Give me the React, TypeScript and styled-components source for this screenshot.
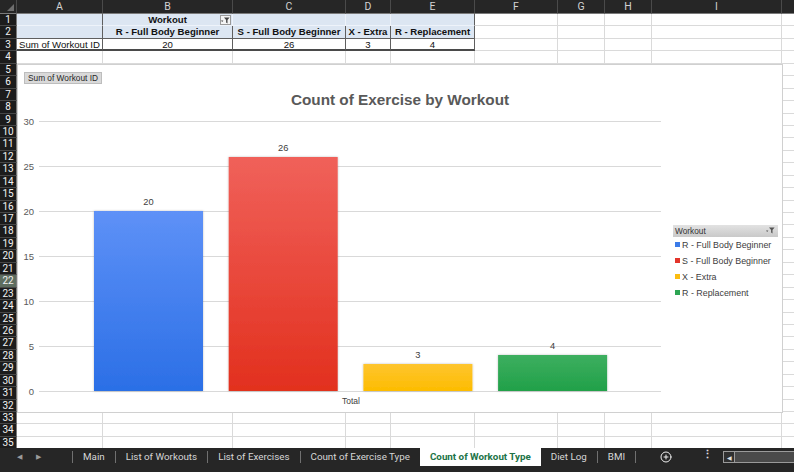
import React from 'react';
import styled, { createGlobalStyle } from 'styled-components';
import { CirclePlus } from 'lucide-react';

const GlobalStyle = createGlobalStyle`
  html, body {
    margin: 0;
    padding: 0;
    background: #262626;
    overflow: hidden;
  }
  * {
    box-sizing: border-box;
  }
`;

const COLUMNS = [
  { name: 'A', width: 86 },
  { name: 'B', width: 130 },
  { name: 'C', width: 113 },
  { name: 'D', width: 45 },
  { name: 'E', width: 84 },
  { name: 'F', width: 83 },
  { name: 'G', width: 47 },
  { name: 'H', width: 47 },
  { name: 'I', width: 130 },
  { name: 'J', width: 60 },
];

const TEMPLATE = `17px ${COLUMNS.map(c => `${c.width}px`).join(' ')}`;
const ROW_COUNT = 35;
const SELECTED_ROW = 22;

type Edge = 'grid' | 'light' | 'dark' | 'thick';

type CellSpec = {
  text?: string;
  band?: boolean;
  strong?: boolean;
  align?: 'left' | 'center';
  right?: Edge;
  bottom?: Edge;
  filter?: boolean;
};

const WORKOUTS = [
  { label: 'R - Full Body Beginner', value: 20, top: '#5e91f7', bottom: '#2b6fe6', swatch: '#3b7be8' },
  { label: 'S - Full Body Beginner', value: 26, top: '#f0615a', bottom: '#e2301e', swatch: '#e3352b' },
  { label: 'X - Extra', value: 3, top: '#fec52f', bottom: '#fdbc00', swatch: '#fbbd11' },
  { label: 'R - Replacement', value: 4, top: '#3daf5f', bottom: '#21a049', swatch: '#2da553' },
];

// Pivot table in A1:E3, everything else is an empty cell.
function cellSpec(row: number, col: number): CellSpec {
  if (row > 3 || col > 4) return {};
  const right: Edge = col === 0 || col === 4 || row > 1 ? 'dark' : 'light';
  if (row === 1) {
    return col === 1
      ? { text: 'Workout', band: true, strong: true, align: 'center', right, bottom: 'light', filter: true }
      : { band: true, right, bottom: 'light' };
  }
  if (row === 2) {
    return col === 0
      ? { band: true, right, bottom: 'dark' }
      : { text: WORKOUTS[col - 1].label, band: true, strong: true, align: 'center', right, bottom: 'dark' };
  }
  return col === 0
    ? { text: 'Sum of Workout ID', right, bottom: 'thick' }
    : { text: String(WORKOUTS[col - 1].value), align: 'center', right, bottom: 'thick' };
}

const edgeCss = (edge: Edge = 'grid') => {
  switch (edge) {
    case 'light':
      return '1px solid #eef3fa';
    case 'dark':
      return '1px solid #5f5f5f';
    case 'thick':
      return '2px solid #4a4a4a';
    default:
      return '1px solid #dadada';
  }
};

const Window = styled.div`
  width: 794px;
  height: 472px;
  display: flex;
  flex-direction: column;
  background: #262626;
  overflow: hidden;
`;

const Sheet = styled.div`
  position: relative;
  height: 448px;
  flex: none;
  overflow: hidden;
  background: #fff;
`;

const Grid = styled.div`
  display: grid;
  grid-template-columns: ${TEMPLATE};
  grid-template-rows: 14px;
  grid-auto-rows: 12.45px;
`;

const Corner = styled.div`
  position: relative;
  background: #262626;
  border-right: 1px solid #4a4a4a;
  border-bottom: 1px solid #7a7a7a;

  &::after {
    content: '';
    position: absolute;
    right: 2px;
    bottom: 2px;
    border-left: 7px solid transparent;
    border-bottom: 7px solid #6e6e6e;
  }
`;

const ColHead = styled.div`
  background: #262626;
  color: #d2d2d2;
  font: 10.5px Roboto, 'Liberation Sans', sans-serif;
  line-height: 13px;
  text-align: center;
  border-right: 1px solid #4a4a4a;
  border-bottom: 1px solid #7a7a7a;
`;

const RowHead = styled.div<{ $selected?: boolean }>`
  background: ${p => (p.$selected ? '#5e6d5f' : '#1c1c1c')};
  color: #f2f2f2;
  font: 10px Roboto, 'Liberation Sans', sans-serif;
  line-height: 12px;
  text-align: center;
  border-bottom: 1px solid #474747;
  border-right: 1px solid #7a7a7a;
`;

const Cell = styled.div<{ $band?: boolean; $strong?: boolean; $align?: string; $right?: Edge; $bottom?: Edge }>`
  position: relative;
  background: ${p => (p.$band ? '#dce6f2' : '#fff')};
  color: #111;
  font-family: 'Liberation Sans', Arial, sans-serif;
  font-size: 9.6px;
  font-weight: ${p => (p.$strong ? 700 : 400)};
  line-height: 12px;
  text-align: ${p => p.$align || 'left'};
  padding: 0 2px;
  white-space: nowrap;
  overflow: hidden;
  border-right: ${p => edgeCss(p.$right)};
  border-bottom: ${p => edgeCss(p.$bottom)};
`;

const FilterButton = styled.span`
  position: absolute;
  right: 1px;
  top: 1px;
  width: 11px;
  height: 10px;
  display: flex;
  align-items: center;
  justify-content: center;
  background: #f4f4f4;
  border: 1px solid #9a9a9a;
`;

const Chart = styled.div`
  position: absolute;
  left: 17px;
  top: 64px;
  width: 766px;
  height: 349px;
  background: #fff;
  border: 1px solid #d0d0d0;
  display: grid;
  grid-template-rows: 48px 1fr;
`;

const ChartHeader = styled.div`
  display: grid;
  grid-template-columns: 1fr auto 1fr;
  align-items: start;
`;

const FieldButton = styled.div`
  justify-self: start;
  margin: 7px 0 0 6px;
  height: 12px;
  padding: 0 3px;
  background: #d9d9d9;
  border: 1px solid #bdbdbd;
  color: #262626;
  font: 8.3px 'Liberation Sans', Arial, sans-serif;
  line-height: 10px;
  white-space: nowrap;
`;

const Title = styled.div`
  padding-top: 26px;
  color: #595959;
  font: 700 15.3px 'Liberation Sans', Arial, sans-serif;
  line-height: 18px;
  white-space: nowrap;
`;

const ChartBody = styled.div`
  display: grid;
  grid-template-columns: 650px 1fr;
`;

const Legend = styled.div`
  align-self: center;
  margin-left: 5px;
  width: 105px;
  display: flex;
  flex-direction: column;
`;

const LegendHeader = styled.div`
  height: 12px;
  display: flex;
  align-items: center;
  justify-content: space-between;
  padding: 0 3px 0 2px;
  background: linear-gradient(#e2e2e2, #c9c9c9);
  color: #333;
  font: 8.3px 'Liberation Sans', Arial, sans-serif;
`;

const LegendItem = styled.div`
  height: 16px;
  display: flex;
  align-items: center;
  gap: 2px;
  padding-left: 2px;
  color: #404040;
  font: 8.9px 'Liberation Sans', Arial, sans-serif;
  white-space: nowrap;
`;

const Swatch = styled.span<{ $color: string }>`
  width: 5px;
  height: 5px;
  background: ${p => p.$color};
`;

const TabBar = styled.div`
  height: 24px;
  flex: none;
  display: flex;
  align-items: flex-start;
  background: #262626;
  font-family: Roboto, 'Liberation Sans', sans-serif;
`;

const Nav = styled.div`
  width: 72px;
  height: 18px;
  display: flex;
  align-items: center;
  gap: 14px;
  padding-left: 17px;
  color: #9a9a9a;
  font-size: 7px;
`;

const Divider = styled.span`
  width: 1px;
  height: 12px;
  margin-top: 3px;
  background: #707070;
`;

const Tab = styled.div<{ $active?: boolean }>`
  height: 18px;
  padding: 0 10px;
  line-height: 18px;
  font-size: 9.8px;
  font-weight: ${p => (p.$active ? 700 : 400)};
  color: ${p => (p.$active ? '#217346' : '#d6d6d6')};
  background: ${p => (p.$active ? '#ffffff' : 'transparent')};
  white-space: nowrap;
`;

const AddSheet = styled.div`
  height: 18px;
  display: flex;
  align-items: center;
  margin-left: 24px;
  color: #f0f0f0;
`;

const More = styled.div`
  height: 18px;
  line-height: 17px;
  margin-left: 30px;
  color: #e0e0e0;
  font: 700 11px 'Liberation Sans', Arial, sans-serif;
`;

const ScrollTrack = styled.div`
  flex: 1;
  height: 12px;
  margin: 3px 0 0 10px;
  display: flex;
  background: #4a4a4a;
  border: 1px solid #9a9a9a;
  border-right: none;
`;

const ScrollArrow = styled.div`
  width: 11px;
  display: flex;
  align-items: center;
  justify-content: center;
  border-right: 1px solid #9a9a9a;
  background: #303030;
  color: #e0e0e0;
  font-size: 6px;
`;

const FunnelIcon = ({ color = '#444' }: { color?: string }) => (
  <svg width="9" height="7" viewBox="0 0 9 7">
    <path d="M0 3.5 L2.4 3.5 L1.2 5 Z" fill={color} />
    <path d="M3 0.5 H8.6 L6.5 3 V6.5 L5.1 5.6 V3 Z" fill={color} />
  </svg>
);

// Bars of the column chart, in SVG units of the plot.
const ZERO_Y = 278;
const UNIT = 9;
const BAR_W = 109;
const barX = (i: number) => 76 + i * 134.7;
const TICKS = [30, 25, 20, 15, 10, 5, 0];

function Plot() {
  return (
    <svg width="650" height="298" viewBox="0 0 650 298">
      <defs>
        {WORKOUTS.map((w, i) => (
          <linearGradient key={i} id={`bar-${i}`} x1="0" y1="0" x2="0" y2="1">
            <stop offset="0" stopColor={w.top} />
            <stop offset="1" stopColor={w.bottom} />
          </linearGradient>
        ))}
        <filter id="bar-shadow" x="-5%" y="-5%" width="110%" height="110%">
          <feDropShadow dx="0" dy="0" stdDeviation="0.8" floodColor="#000" floodOpacity="0.25" />
        </filter>
      </defs>
      {TICKS.map(t => {
        const y = ZERO_Y - t * UNIT + 0.5;
        return (
          <g key={t}>
            <line x1="21" x2="643" y1={y} y2={y} stroke="#d9d9d9" strokeWidth="1" />
            <text x="16" y={y + 3.5} textAnchor="end" fill="#595959" fontSize="9.5" fontFamily="'Liberation Sans', Arial, sans-serif">
              {t}
            </text>
          </g>
        );
      })}
      {WORKOUTS.map((w, i) => {
        const h = w.value * UNIT;
        const x = barX(i);
        return (
          <g key={w.label}>
            <rect x={x} y={ZERO_Y - h} width={BAR_W} height={h} fill={`url(#bar-${i})`} filter="url(#bar-shadow)" />
            <text x={x + BAR_W / 2} y={ZERO_Y - h - 6.5} textAnchor="middle" fill="#404040" fontSize="9.3" fontFamily="'Liberation Sans', Arial, sans-serif">
              {w.value}
            </text>
          </g>
        );
      })}
      <text x="333" y="291" textAnchor="middle" fill="#404040" fontSize="8.5" fontFamily="'Liberation Sans', Arial, sans-serif">
        Total
      </text>
    </svg>
  );
}

const TABS = ['Main', 'List of Workouts', 'List of Exercises', 'Count of Exercise Type', 'Count of Workout Type', 'Diet Log', 'BMI'];
const ACTIVE_TAB = 4;

export default function App() {
  const rows = Array.from({ length: ROW_COUNT }, (_, i) => i + 1);

  return (
    <Window>
      <GlobalStyle />
      <Sheet>
        <Grid>
          <Corner />
          {COLUMNS.map(c => (
            <ColHead key={c.name}>{c.name === 'J' ? '' : c.name}</ColHead>
          ))}
          {rows.map(r => (
            <React.Fragment key={r}>
              <RowHead $selected={r === SELECTED_ROW}>{r}</RowHead>
              {COLUMNS.map((c, ci) => {
                const spec = cellSpec(r, ci);
                return (
                  <Cell
                    key={c.name}
                    $band={spec.band}
                    $strong={spec.strong}
                    $align={spec.align}
                    $right={spec.right}
                    $bottom={spec.bottom}
                  >
                    {spec.text}
                    {spec.filter && (
                      <FilterButton>
                        <FunnelIcon />
                      </FilterButton>
                    )}
                  </Cell>
                );
              })}
            </React.Fragment>
          ))}
        </Grid>

        <Chart>
          <ChartHeader>
            <FieldButton>Sum of Workout ID</FieldButton>
            <Title>Count of Exercise by Workout</Title>
          </ChartHeader>
          <ChartBody>
            <Plot />
            <Legend>
              <LegendHeader>
                Workout
                <FunnelIcon color="#555" />
              </LegendHeader>
              {WORKOUTS.map(w => (
                <LegendItem key={w.label}>
                  <Swatch $color={w.swatch} />
                  {w.label}
                </LegendItem>
              ))}
            </Legend>
          </ChartBody>
        </Chart>
      </Sheet>

      <TabBar>
        <Nav>
          <span>◀</span>
          <span>▶</span>
        </Nav>
        <Divider />
        {TABS.map((t, i) => (
          <React.Fragment key={t}>
            <Tab $active={i === ACTIVE_TAB}>{t}</Tab>
            {i !== ACTIVE_TAB - 1 && i !== ACTIVE_TAB && <Divider />}
          </React.Fragment>
        ))}
        <AddSheet>
          <CirclePlus size={12} strokeWidth={2} />
        </AddSheet>
        <More>⋮</More>
        <ScrollTrack>
          <ScrollArrow>◀</ScrollArrow>
        </ScrollTrack>
      </TabBar>
    </Window>
  );
}
